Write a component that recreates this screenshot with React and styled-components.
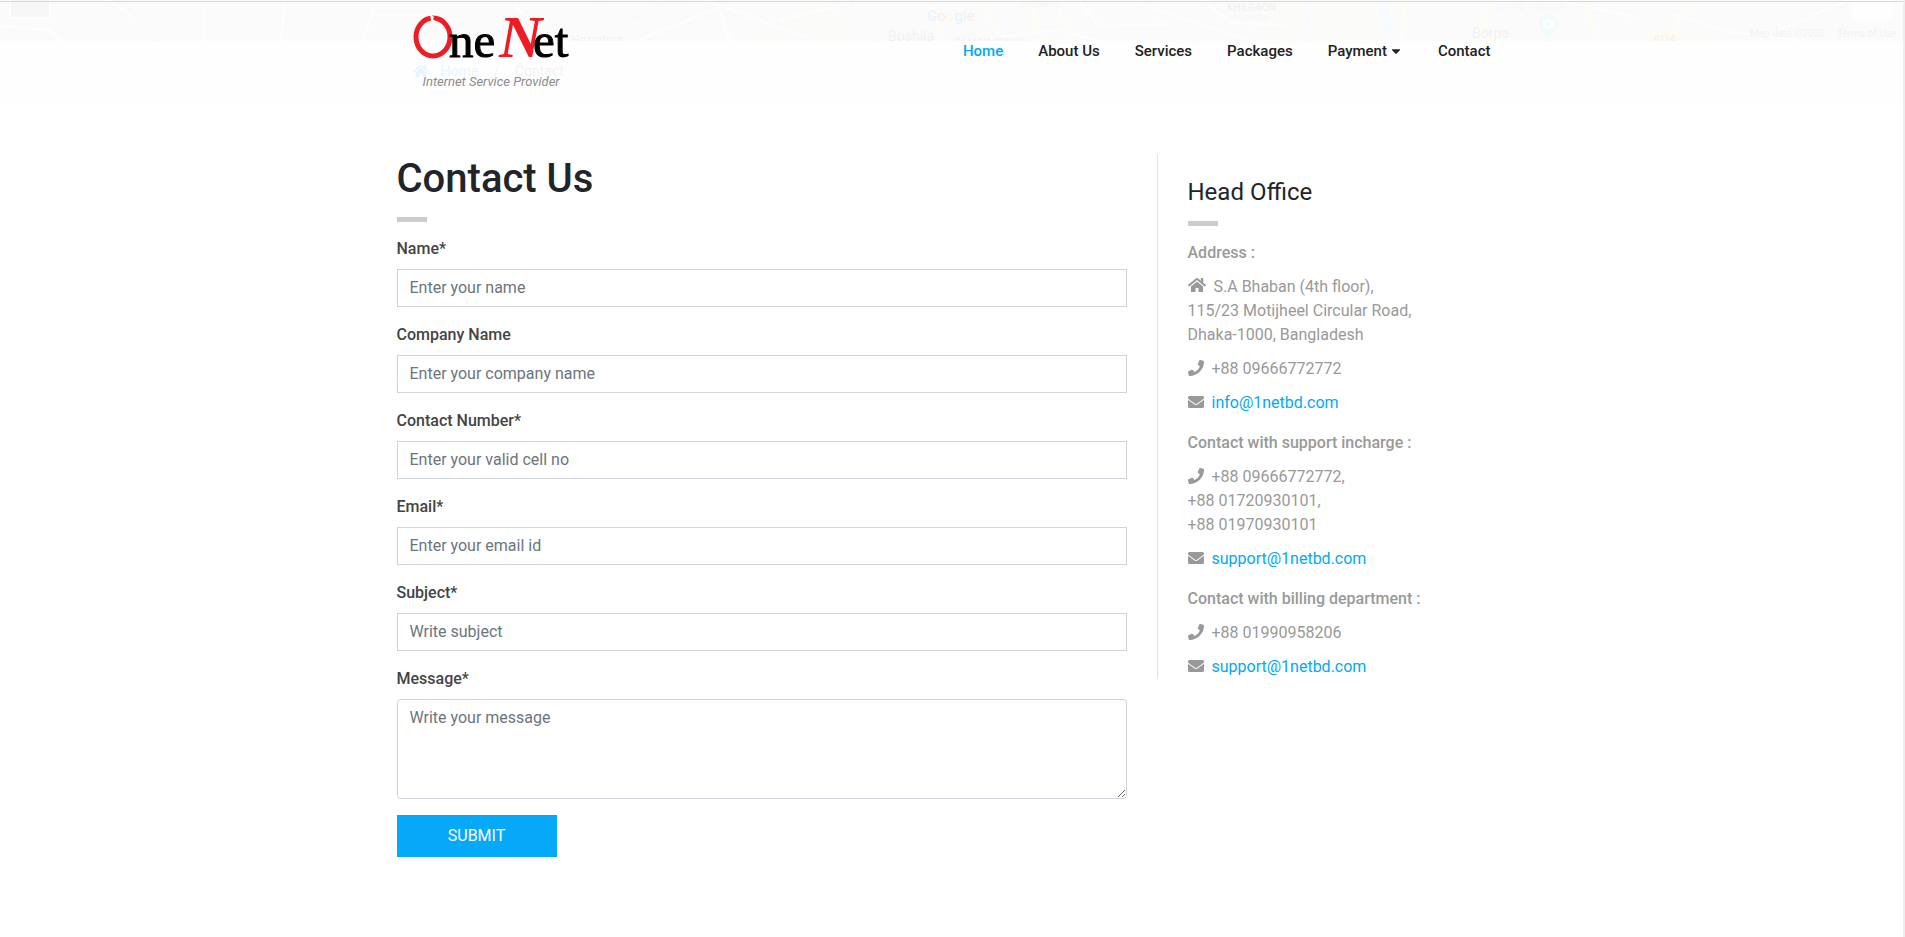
import React from "react";
import styled, { createGlobalStyle } from "styled-components";
import { FaHome, FaPhone, FaEnvelope, FaCaretDown } from "react-icons/fa";

const GlobalStyle = createGlobalStyle`
  *, *::before, *::after { box-sizing: border-box; }
  body {
    margin: 0;
    background: #fff;
    color: #212529;
    font-family: Roboto, "Liberation Sans", sans-serif;
    font-size: 16px;
    line-height: 24px;
  }
  a { color: #03a9f4; text-decoration: none; }
`;

const Page = styled.div`
  position: relative;
  min-height: 100vh;
  border-right: 2px solid #eee;
`;

const Container = styled.div`
  width: 100%;
  max-width: 1140px;
  margin: 0 auto;
  padding: 0 15px;
`;

const Header = styled.header`
  position: absolute;
  inset: 0 0 auto 0;
  height: 105px;
  padding-top: 1px;
  background: rgba(254, 254, 254, 0.9);
  &::before {
    content: "";
    display: block;
    height: 1px;
    background: #d5dbd9;
  }
`;

const HeaderRow = styled(Container)`
  display: flex;
  justify-content: space-between;
  padding: 12px 31px 0;
`;

const Brand = styled.a`
  display: flex;
  flex-direction: column;
  width: 160px;
`;

const Tagline = styled.span`
  margin-top: 12px;
  padding-left: 10px;
  color: #8c8c8c;
  font-size: 13px;
  font-style: italic;
  line-height: 20px;
  white-space: nowrap;
`;

const Nav = styled.nav`
  display: flex;
  gap: 35px;
  height: 24px;
  margin-top: 25px;
`;

const NavLink = styled.a`
  color: ${(p) => (p.$active ? "#03a9f4" : "#222")};
  font-size: 15px;
  font-weight: 500;
`;

const NavButton = styled.button`
  display: flex;
  align-items: center;
  gap: 2px;
  padding: 0;
  border: 0;
  background: none;
  color: #222;
  font: inherit;
  font-size: 15px;
  font-weight: 500;
`;

const MapStrip = styled.div`
  height: 41px;
  overflow: hidden;
  background: #e0e0e0;
  svg { display: block; width: 100%; height: 41px; }
`;

const Breadcrumb = styled(Container)`
  display: flex;
  align-items: center;
  height: 60px;
  padding: 0 31px;
  gap: 12px;
  color: #777;
  font-size: 14px;
`;

const Columns = styled(Container)`
  display: grid;
  grid-template-columns: minmax(0, 73fr) minmax(0, 35fr);
  align-items: start;
  column-gap: 30px;
  padding-top: 53px;
  padding-bottom: 80px;
`;

const Title = styled.h1`
  margin: 0 0 13px;
  font-size: 40px;
  font-weight: 500;
  line-height: 50px;
`;

const Subtitle = styled.h3`
  margin: 0 0 13px;
  color: #212529;
  font-size: 24px;
  font-weight: 400;
  line-height: 31px;
`;

const Bar = styled.div`
  width: 30px;
  height: 5px;
  margin-bottom: 15px;
  background: #ccc;
`;

const Field = styled.div`
  display: flex;
  flex-direction: column;
  gap: 8px;
  margin-bottom: 16px;
`;

const Label = styled.label`
  color: #444;
  font-weight: 500;
`;

const Input = styled.input`
  width: 100%;
  height: 38px;
  padding: 5px 12px 7px;
  border: 1px solid #ced4da;
  border-radius: 0;
  background: #fff;
  font: inherit;
  &::placeholder { color: #6c757d; opacity: 1; }
`;

const TextArea = styled.textarea`
  width: 100%;
  height: 100px;
  padding: 6px 12px;
  border: 1px solid #ced4da;
  border-radius: 4px;
  background: #fff;
  font: inherit;
  resize: vertical;
  &::placeholder { color: #6c757d; opacity: 1; }
`;

const Submit = styled.button`
  width: 160px;
  height: 42px;
  border: 0;
  background: #05a9f7;
  color: #fff;
  font: inherit;
`;

const Office = styled.aside`
  padding: 23px 0 0 30px;
  border-left: 1px solid #e5e5e5;
  color: #999;
`;

const Group = styled.section`
  display: flex;
  flex-direction: column;
  gap: 10px;
  & + & { margin-top: 16px; }
`;

const GroupTitle = styled.strong`
  font-weight: 500;
`;

const Line = styled.div`
  svg {
    margin-right: 8px;
    vertical-align: -2px;
  }
`;

const fields = [
  ["name", "Name*", "Enter your name", "text"],
  ["company", "Company Name", "Enter your company name", "text"],
  ["phone", "Contact Number*", "Enter your valid cell no", "tel"],
  ["email", "Email*", "Enter your email id", "email"],
  ["subject", "Subject*", "Write subject", "text"],
];

function Logo() {
  return (
    <svg width="160" height="46" viewBox="0 0 160 46" role="img" aria-label="One Net">
      <ellipse cx="20" cy="23" rx="17" ry="19" fill="none" stroke="#ee1c25" strokeWidth="5" />
      <path d="M17 0l4 3-1 2 2 2-3 2-1-3z" fill="#fff" />
      <g fontFamily="Liberation Serif, serif" fontSize="49">
        <text x="36" y="43" stroke="#000" strokeWidth="1">ne</text>
        <text x="86" y="43" fontSize="60" fontWeight="700" fontStyle="italic" fill="#ee1c25">N</text>
        <text x="120" y="43" stroke="#000" strokeWidth="1">et</text>
      </g>
    </svg>
  );
}

function MapDrawing() {
  return (
    <svg viewBox="0 0 1905 41" preserveAspectRatio="xMidYMin slice" aria-hidden="true">
      <path d="M832 0L850 28 870 41H700L790 22 800 0zM1265 0H1380L1400 41H1265zM1640 28H1750V41H1640z" fill="#dde8d8" />
      <path d="M123 0C135 18 150 30 158 41M592 0C606 15 628 20 660 18M850 0L862 22 875 41M1304 0C1320 14 1300 25 1312 41M640 16Q665 0 690 4" fill="none" stroke="#bcdff5" strokeWidth="4" />
      <path d="M1382 0L1392 41" stroke="#bcdff5" strokeWidth="9" />
      <path d="M0 26L50 30 63 41M110 0L136 18M205 8V41M286 0L282 41M376 6L364 41M378 15H430L450 38M515 5L548 36M640 40L720 8 730 41M705 0L810 38M780 20L850 4M990 38L1060 30 1100 41M1080 0L1100 26 1170 24M1140 4L1250 40M1205 0L1230 22 1290 26M1560 0L1640 18M1672 14L1730 32 1800 40M1770 34L1850 0" fill="none" stroke="#fff" strokeWidth="2" />
      <path d="M932 0L943 41M982 0L1002 41M1030 0L1044 41M1060 8L1074 41M1406 0L1402 41M1492 0L1478 41M1586 0L1598 41M1700 0L1672 30" fill="none" stroke="#ffe6a0" strokeWidth="3" />
      <rect x="11" y="-10" width="40" height="28" fill="#bbb" stroke="#fff" strokeWidth="2" />
      <rect x="1853" y="-10" width="40" height="31" fill="#fff" />
      <g fontFamily="Roboto, sans-serif" fill="#777">
        <text x="572" y="44" fontSize="12">Hazratpur</text>
        <text x="889" y="41" fontSize="14">Boshila</text>
        <text x="955" y="47" fontSize="12">DHANMONDI</text>
        <text x="1228" y="11" fontSize="10" fontWeight="500">KHILGAON</text>
        <text x="1473" y="38" fontSize="14">Borpa</text>
        <text x="1751" y="37" fontSize="10">Map data ©2020</text>
        <text x="1838" y="37" fontSize="10">Terms of Use</text>
      </g>
      <text x="928" y="21" fontFamily="Roboto, sans-serif" fontSize="15" fontWeight="500">
        <tspan fill="#4285f4">G</tspan><tspan fill="#ea4335">o</tspan><tspan fill="#fbbc05">o</tspan><tspan fill="#4285f4">g</tspan><tspan fill="#34a853">l</tspan><tspan fill="#ea4335">e</tspan>
      </text>
      <g fontFamily="Roboto, sans-serif" fontSize="10" fill="#999">
        <text x="1021" y="9">তেজগাঁও</text>
        <text x="1235" y="21">খিলগাঁও</text>
        <text x="1497" y="10">বাংলার তাজমহল</text>
      </g>
      <rect x="1652" y="32" width="26" height="12" fill="#ffe27a" />
      <text x="1655" y="42" fontFamily="Roboto, sans-serif" fontSize="9" fill="#666">R114</text>
      <path d="M1549 41C1545 31 1540 30 1540 23A9 9 0 0 1 1558 23C1558 30 1553 31 1549 41z" fill="#7fd9ea" />
      <path d="M1544 20h3l1-2h3l1 2h3v8h-11z" fill="#fff" />
      <circle cx="1549" cy="24" r="2" fill="#7fd9ea" />
    </svg>
  );
}

export default function App() {
  return (
    <>
      <GlobalStyle />
      <Page>
        <MapStrip><MapDrawing /></MapStrip>
        <Breadcrumb as="nav" aria-label="Breadcrumb">
          <FaHome size={16} color="#03a9f4" />
          <a href="#home">Home</a>
          <span>&nbsp;/&nbsp;</span>
          <span>Contact</span>
        </Breadcrumb>

        <Header>
          <HeaderRow>
            <Brand href="#home">
              <Logo />
              <Tagline>Internet Service Provider</Tagline>
            </Brand>
            <Nav>
              <NavLink href="#home" $active>Home</NavLink>
              <NavLink href="#about">About Us</NavLink>
              <NavLink href="#services">Services</NavLink>
              <NavLink href="#packages">Packages</NavLink>
              <NavButton type="button" aria-haspopup="true">
                Payment <FaCaretDown size={14} />
              </NavButton>
              <NavLink href="#contact">Contact</NavLink>
            </Nav>
          </HeaderRow>
        </Header>

        <Columns as="main">
          <form onSubmit={(e) => e.preventDefault()}>
            <Title>Contact Us</Title>
            <Bar />
            {fields.map(([id, label, placeholder, type]) => (
              <Field key={id}>
                <Label htmlFor={id}>{label}</Label>
                <Input id={id} name={id} type={type} placeholder={placeholder} />
              </Field>
            ))}
            <Field>
              <Label htmlFor="message">Message*</Label>
              <TextArea id="message" name="message" placeholder="Write your message" />
            </Field>
            <Submit type="submit">SUBMIT</Submit>
          </form>

          <Office>
            <Subtitle>Head Office</Subtitle>
            <Bar />
            <Group>
              <GroupTitle>Address :</GroupTitle>
              <Line>
                <FaHome size={18} />S.A Bhaban (4th floor),<br />
                115/23 Motijheel Circular Road,<br />
                Dhaka-1000, Bangladesh
              </Line>
              <Line><FaPhone size={16} />+88 09666772772</Line>
              <Line><FaEnvelope size={16} /><a href="mailto:info@1netbd.com">info@1netbd.com</a></Line>
            </Group>
            <Group>
              <GroupTitle>Contact with support incharge :</GroupTitle>
              <Line>
                <FaPhone size={16} />+88 09666772772,<br />
                +88 01720930101,<br />
                +88 01970930101
              </Line>
              <Line><FaEnvelope size={16} /><a href="mailto:support@1netbd.com">support@1netbd.com</a></Line>
            </Group>
            <Group>
              <GroupTitle>Contact with billing department :</GroupTitle>
              <Line><FaPhone size={16} />+88 01990958206</Line>
              <Line><FaEnvelope size={16} /><a href="mailto:support@1netbd.com">support@1netbd.com</a></Line>
            </Group>
          </Office>
        </Columns>
      </Page>
    </>
  );
}
